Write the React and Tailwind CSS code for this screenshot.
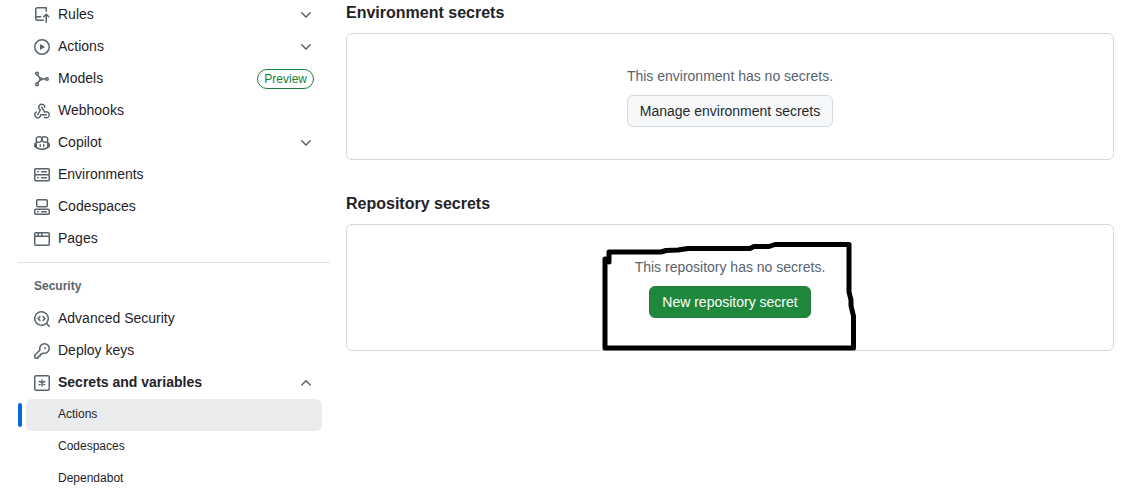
const ICONS = {
  push: [
    "M1 2.5A2.5 2.5 0 0 1 3.5 0h8.75a.75.75 0 0 1 .75.75v3.5a.75.75 0 0 1-1.5 0V1.5h-8a1 1 0 0 0-1 1v6.708A2.493 2.493 0 0 1 3.5 9h3.25a.75.75 0 0 1 0 1.5H3.5a1 1 0 0 0 0 2h5.75a.75.75 0 0 1 0 1.5H3.5A2.5 2.5 0 0 1 1 11.5Zm13.23 7.79h-.001l-1.224-1.224v6.184a.75.75 0 0 1-1.5 0V9.066L10.28 10.29a.75.75 0 0 1-1.06-1.061l2.505-2.504a.75.75 0 0 1 1.06 0L15.29 9.23a.751.751 0 0 1-.018 1.042.751.751 0 0 1-1.042.018Z",
  ],
  play: [
    "M8 0a8 8 0 1 1 0 16A8 8 0 0 1 8 0ZM1.5 8a6.5 6.5 0 1 0 13 0 6.5 6.5 0 0 0-13 0Zm4.879-2.773 4.264 2.559a.25.25 0 0 1 0 .428l-4.264 2.559A.25.25 0 0 1 6 10.559V5.442a.25.25 0 0 1 .379-.215Z",
  ],
  webhook: [
    "M5.5 4.25a2.25 2.25 0 0 1 4.5 0 .75.75 0 0 0 1.5 0 3.75 3.75 0 1 0-6.14 2.889l-2.272 4.258a.75.75 0 0 0 1.324.706L7 7.25a.75.75 0 0 0-.309-1.015A2.25 2.25 0 0 1 5.5 4.25Z",
    "M7.364 3.607a.75.75 0 0 1 1.03.257l2.608 4.349a3.75 3.75 0 1 1-.628 6.785.75.75 0 0 1 .752-1.299 2.25 2.25 0 1 0-.033-3.88.75.75 0 0 1-1.03-.256L7.107 4.636a.75.75 0 0 1 .257-1.03Z",
    "M2.9 8.776A.75.75 0 0 1 2.625 9.8 2.25 2.25 0 1 0 6 11.75a.75.75 0 0 1 .75-.751h5.5a.75.75 0 0 1 0 1.5H7.425a3.751 3.751 0 1 1-5.55-3.998.75.75 0 0 1 1.024.274Z",
  ],
  copilot: [
    "M7.998 15.035c-4.562 0-7.873-2.914-7.998-3.749V9.338c.085-.628.677-1.686 1.588-2.065.013-.07.024-.143.036-.218.029-.183.06-.384.126-.612-.201-.508-.254-1.084-.254-1.656 0-.87.128-1.769.693-2.484.579-.733 1.494-1.124 2.724-1.261 1.206-.134 2.262.034 2.944.765.05.053.096.108.139.165.044-.057.094-.112.143-.165.682-.731 1.738-.899 2.944-.765 1.23.137 2.145.528 2.724 1.261.566.715.693 1.614.693 2.484 0 .572-.053 1.148-.254 1.656.066.228.098.429.126.612.012.076.024.148.037.218.924.385 1.522 1.471 1.591 2.095v1.872c0 .766-3.351 3.795-8.002 3.795Zm0-1.485c2.28 0 4.584-1.11 5.002-1.433V7.862l-.023-.116c-.49.21-1.075.291-1.727.291-1.146 0-2.059-.327-2.71-.991A3.222 3.222 0 0 1 8 6.303a3.24 3.24 0 0 1-.544.743c-.65.664-1.563.991-2.71.991-.652 0-1.236-.081-1.727-.291l-.023.116v4.255c.419.323 2.722 1.433 5.002 1.433ZM6.762 2.83c-.193-.206-.637-.413-1.682-.297-1.019.113-1.479.404-1.713.7-.247.312-.369.789-.369 1.554 0 .793.129 1.171.308 1.371.162.181.519.379 1.442.379.853 0 1.339-.235 1.638-.54.315-.322.527-.827.617-1.553.117-.935-.037-1.395-.241-1.614Zm4.155-.297c-1.044-.116-1.488.091-1.681.297-.204.219-.359.679-.242 1.614.091.726.303 1.231.618 1.553.299.305.784.54 1.638.54.922 0 1.28-.198 1.442-.379.179-.2.308-.578.308-1.371 0-.765-.123-1.242-.37-1.554-.233-.296-.693-.587-1.713-.7Z",
    "M6.25 9.037a.75.75 0 0 1 .75.75v1.501a.75.75 0 0 1-1.5 0V9.787a.75.75 0 0 1 .75-.75Zm4.25.75v1.501a.75.75 0 0 1-1.5 0V9.787a.75.75 0 0 1 1.5 0Z",
  ],
  server: [
    "M1.75 1h12.5c.966 0 1.75.784 1.75 1.75v4c0 .372-.116.717-.314 1 .198.283.314.628.314 1v4a1.75 1.75 0 0 1-1.75 1.75H1.75A1.75 1.75 0 0 1 0 12.75v-4c0-.358.109-.707.314-1a1.739 1.739 0 0 1-.314-1v-4C0 1.784.784 1 1.75 1ZM1.5 2.75v4c0 .138.112.25.25.25h12.5a.25.25 0 0 0 .25-.25v-4a.25.25 0 0 0-.25-.25H1.75a.25.25 0 0 0-.25.25Zm.25 5.75a.25.25 0 0 0-.25.25v4c0 .138.112.25.25.25h12.5a.25.25 0 0 0 .25-.25v-4a.25.25 0 0 0-.25-.25ZM7 4.75A.75.75 0 0 1 7.75 4h4.5a.75.75 0 0 1 0 1.5h-4.5A.75.75 0 0 1 7 4.75ZM7.75 10h4.5a.75.75 0 0 1 0 1.5h-4.5a.75.75 0 0 1 0-1.5ZM3 4.75A.75.75 0 0 1 3.75 4h.5a.75.75 0 0 1 0 1.5h-.5A.75.75 0 0 1 3 4.75ZM3.75 10h.5a.75.75 0 0 1 0 1.5h-.5a.75.75 0 0 1 0-1.5Z",
  ],
  codespaces: [
    "M0 11.25c0-.966.784-1.75 1.75-1.75h12.5c.966 0 1.75.784 1.75 1.75v3A1.75 1.75 0 0 1 14.25 16H1.75A1.75 1.75 0 0 1 0 14.25Zm2-9.5C2 .784 2.784 0 3.75 0h8.5C13.216 0 14 .784 14 1.75v5a1.75 1.75 0 0 1-1.75 1.75h-8.5A1.75 1.75 0 0 1 2 6.75Zm1.75-.25a.25.25 0 0 0-.25.25v5c0 .138.112.25.25.25h8.5a.25.25 0 0 0 .25-.25v-5a.25.25 0 0 0-.25-.25Zm-2 9.5a.25.25 0 0 0-.25.25v3c0 .138.112.25.25.25h12.5a.25.25 0 0 0 .25-.25v-3a.25.25 0 0 0-.25-.25Z",
    "M7 12.75a.75.75 0 0 1 .75-.75h4.5a.75.75 0 0 1 0 1.5h-4.5a.75.75 0 0 1-.75-.75Zm-4 0a.75.75 0 0 1 .75-.75h.5a.75.75 0 0 1 0 1.5h-.5a.75.75 0 0 1-.75-.75Z",
  ],
  browser: [
    "M0 2.75C0 1.784.784 1 1.75 1h12.5c.966 0 1.75.784 1.75 1.75v10.5A1.75 1.75 0 0 1 14.25 15H1.75A1.75 1.75 0 0 1 0 13.25ZM14.5 6h-13v7.25c0 .138.112.25.25.25h12.5a.25.25 0 0 0 .25-.25Zm-6-3.5v2h6V2.75a.25.25 0 0 0-.25-.25ZM5 2.5v2h2v-2Zm-3.25 0a.25.25 0 0 0-.25.25V4.5h2v-2Z",
  ],
  codescan: [
    "M8.47 4.97a.75.75 0 0 0 0 1.06L9.94 7.5 8.47 8.97a.75.75 0 1 0 1.06 1.06l2-2a.75.75 0 0 0 0-1.06l-2-2a.75.75 0 0 0-1.06 0ZM6.53 6.03a.75.75 0 0 0-1.06-1.06l-2 2a.75.75 0 0 0 0 1.06l2 2a.75.75 0 1 0 1.06-1.06L5.06 7.5l1.47-1.47Z",
    "M12.246 13.307a7.501 7.501 0 1 1 1.06-1.06l2.474 2.473a.749.749 0 0 1-.326 1.275.749.749 0 0 1-.734-.215ZM1.5 7.5a6.002 6.002 0 0 0 3.608 5.504 6.002 6.002 0 0 0 6.486-1.117.748.748 0 0 1 .292-.293A6 6 0 1 0 1.5 7.5Z",
  ],
  key: [
    "M10.5 0a5.499 5.499 0 1 1-1.288 10.848l-.932.932a.749.749 0 0 1-.53.22H7v.75a.749.749 0 0 1-.22.53l-.5.5a.749.749 0 0 1-.53.22H5v.75a.749.749 0 0 1-.22.53l-.5.5a.749.749 0 0 1-.53.22h-2A1.75 1.75 0 0 1 0 14.25v-2c0-.199.079-.389.22-.53l4.932-4.932A5.5 5.5 0 0 1 10.5 0Zm-4 5.5c-.001.431.069.86.205 1.269a.75.75 0 0 1-.181.768L1.5 12.56v1.69c0 .138.112.25.25.25h1.69l.06-.06v-1.19a.75.75 0 0 1 .75-.75h1.19l.06-.06v-1.19a.75.75 0 0 1 .75-.75h1.19l1.023-1.025a.75.75 0 0 1 .768-.18A4 4 0 1 0 6.5 5.5ZM11 6a1 1 0 1 1 0-2 1 1 0 0 1 0 2Z",
  ],
  down: [
    "M12.78 5.22a.749.749 0 0 1 0 1.06l-4.25 4.25a.749.749 0 0 1-1.06 0L3.22 6.28a.749.749 0 1 1 1.06-1.06L8 8.939l3.72-3.719a.749.749 0 0 1 1.06 0Z",
  ],
  up: [
    "M3.22 10.53a.749.749 0 0 1 0-1.06l4.25-4.25a.749.749 0 0 1 1.06 0l4.25 4.25a.749.749 0 1 1-1.06 1.06L8 6.811 4.28 10.53a.749.749 0 0 1-1.06 0Z",
  ],
};

function ModelIcon() {
  return (
    <svg viewBox="0 0 16 16" className="size-4 shrink-0 text-[#59636e]" fill="none" stroke="currentColor" strokeWidth="1.5" aria-hidden="true">
      <circle cx="3" cy="2.6" r="1.35" />
      <circle cx="3" cy="13.4" r="1.35" />
      <circle cx="6.8" cy="8" r="1.1" />
      <circle cx="12.9" cy="8" r="1.35" />
      <path d="M7.900 8h3.600M3.400 4l2.700 3M3.400 12l2.700-3" />
    </svg>
  );
}

function AsteriskIcon() {
  return (
    <svg viewBox="0 0 16 16" className="size-4 shrink-0 text-[#59636e]" fill="none" stroke="currentColor" strokeWidth="1.5" strokeLinecap="round" aria-hidden="true">
      <rect x=".75" y=".75" width="14.5" height="14.5" rx="1.5" />
      <path d="M8 4.900v6.200M5.300 6.400l5.400 3.200M10.700 6.400 5.300 9.600" />
    </svg>
  );
}

function Icon({ name }) {
  if (name === "model") return <ModelIcon />;
  if (name === "asterisk") return <AsteriskIcon />;
  return (
    <svg viewBox="0 0 16 16" className="size-4 shrink-0 text-[#59636e]" fill="currentColor" aria-hidden="true">
      {ICONS[name].map((d) => (
        <path key={d} d={d} />
      ))}
    </svg>
  );
}

const rowClass = "flex h-8 w-full items-center gap-2 rounded-md px-2 text-left text-sm";

function NavLink({ icon, label, badge }) {
  return (
    <li>
      <a href="#" className={rowClass}>
        <Icon name={icon} />
        <span className="grow pb-0.5">{label}</span>
        {badge && (
          <span className="rounded-full border border-[#1a7f37] px-1.5 text-xs leading-[18px] text-[#1a7f37]">{badge}</span>
        )}
      </a>
    </li>
  );
}

function NavGroup({ icon, label, open, children }) {
  return (
    <li>
      <button type="button" aria-expanded={!!open} className={rowClass}>
        <Icon name={icon} />
        <span className={open ? "grow pb-0.5 font-bold" : "grow pb-0.5"}>{label}</span>
        <Icon name={open ? "up" : "down"} />
      </button>
      {children}
    </li>
  );
}

function SubLink({ label, current }) {
  return (
    <li className="relative">
      {current && <span className="absolute top-1 -left-2 h-6 w-1 rounded-md bg-[#0969da]" />}
      <a
        href="#"
        aria-current={current ? "page" : undefined}
        className={
          current
            ? "flex h-8 items-center rounded-md bg-[#ebecee] pb-0.5 pl-8 text-xs"
            : "flex h-8 items-center rounded-md pb-0.5 pl-8 text-xs"
        }
      >
        {label}
      </a>
    </li>
  );
}

function SecretsPanel({ title, message, children, overlay }) {
  return (
    <section>
      <h2 className="mb-2 pt-px text-base leading-6 font-bold">{title}</h2>
      <div className="relative flex flex-col items-center rounded-md border border-[#d4d8dc] px-8 py-8">
        <p className="mb-2 text-sm leading-[21px] text-[#59636e]">{message}</p>
        {children}
        {overlay}
      </div>
    </section>
  );
}

function Marker() {
  return (
    <svg
      viewBox="0 0 260 112"
      className="pointer-events-none absolute top-[15px] left-1/2 h-28 w-[260px] -translate-x-1/2 text-black"
      fill="none"
      stroke="currentColor"
      strokeWidth="5"
      strokeLinecap="round"
      strokeLinejoin="round"
      aria-hidden="true"
    >
      <path d="M9 22V12H61L66 10.5 78 10 88 8.5H150L154 6.5H169L175 4.5H249V52L251 60 251 66 253.500 76V108H5V19L9 20" />
    </svg>
  );
}

export default function App() {
  return (
    <div className="flex gap-4 overflow-x-clip bg-white pr-[30px] pl-[18px] font-['Liberation_Sans',Arial,sans-serif] text-[#1f2328]">
      <nav aria-label="Settings" className="-mt-px w-[312px] shrink-0">
        <ul className="px-2">
          <NavGroup icon="push" label="Rules" />
          <NavGroup icon="play" label="Actions" />
          <NavLink icon="model" label="Models" badge="Preview" />
          <NavLink icon="webhook" label="Webhooks" />
          <NavGroup icon="copilot" label="Copilot" />
          <NavLink icon="server" label="Environments" />
          <NavLink icon="codespaces" label="Codespaces" />
          <NavLink icon="browser" label="Pages" />
        </ul>
        <hr className="mt-[7px] mb-2 border-[#dfe2e6]" />
        <h3 className="px-4 pb-0.5 text-xs leading-[30px] font-bold text-[#59636e]">Security</h3>
        <ul className="px-2">
          <NavLink icon="codescan" label="Advanced Security" />
          <NavLink icon="key" label="Deploy keys" />
          <NavGroup icon="asterisk" label="Secrets and variables" open>
            <ul>
              <SubLink label="Actions" current />
              <SubLink label="Codespaces" />
              <SubLink label="Dependabot" />
            </ul>
          </NavGroup>
        </ul>
      </nav>
      <main className="flex min-w-0 grow flex-col gap-[31px]">
        <SecretsPanel title="Environment secrets" message="This environment has no secrets.">
          <button type="button" className="h-8 rounded-md border border-[#d1d9e0] bg-[#f6f8fa] px-3 text-sm text-[#25292e]">
            Manage environment secrets
          </button>
        </SecretsPanel>
        <SecretsPanel title="Repository secrets" message="This repository has no secrets." overlay={<Marker />}>
          <button type="button" className="h-8 rounded-md border border-[#1f7f3a] bg-[#1f883d] px-3 text-sm text-white">
            New repository secret
          </button>
        </SecretsPanel>
      </main>
    </div>
  );
}
